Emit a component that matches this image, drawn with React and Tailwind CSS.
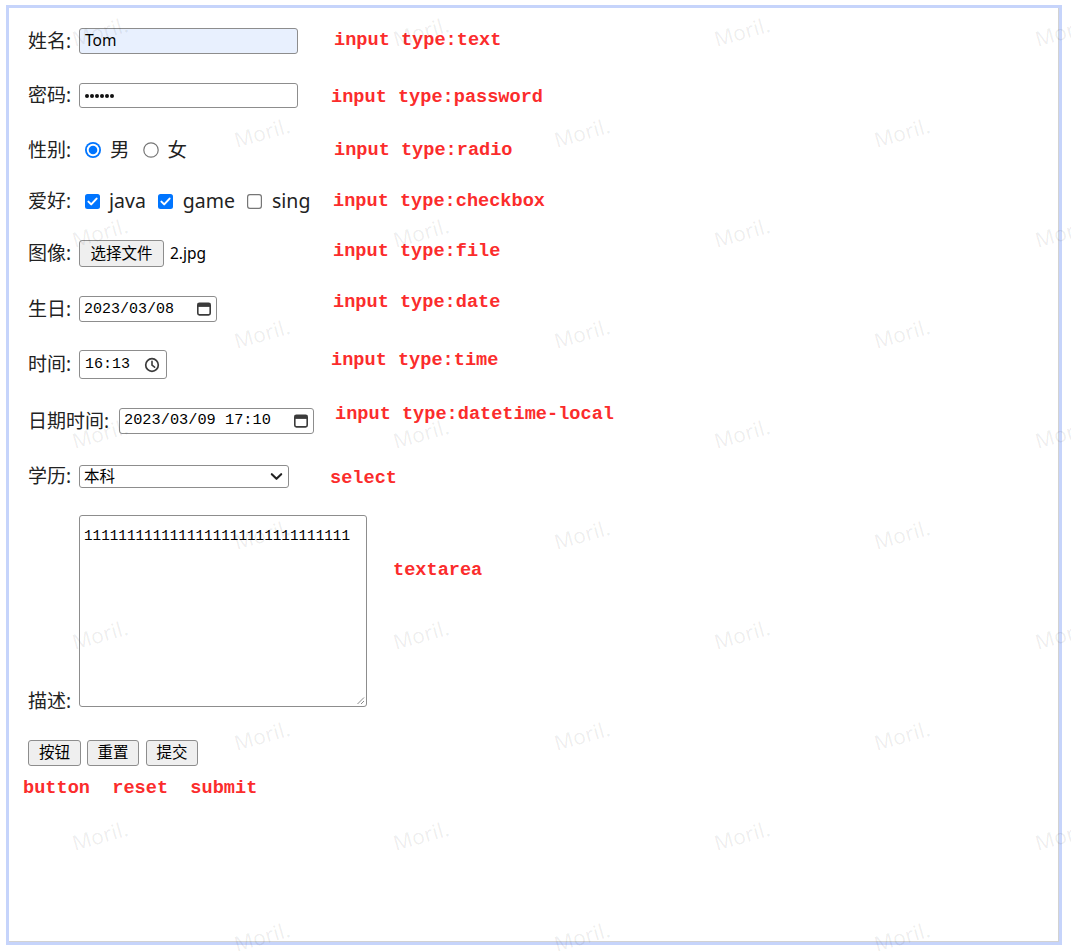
import React from 'react';

const marks = [];
for (let r = 0; r < 10; r++) {
  const xs = r % 2 === 0 ? [100, 421, 742, 1063] : [262, 582, 902];
  xs.forEach((x) => marks.push({ x, y: 32 + r * 100.5 }));
}

const Label = ({ children, w = 'w-[51px]' }) => (
  <span className={`${w} shrink-0 text-[19px] leading-none text-[#222]`}>{children}</span>
);

const Note = ({ children, className = '' }) => (
  <span className={`font-['Liberation_Mono',monospace] font-bold text-[18.6px] leading-none text-[#fb2c2c] whitespace-pre ${className}`}>
    {children}
  </span>
);

const Radio = ({ checked }) =>
  checked ? (
    <svg width="16" height="16" viewBox="0 0 16 16" className="shrink-0">
      <circle cx="8" cy="8" r="8" fill="#0075ff" />
      <circle cx="8" cy="8" r="6.2" fill="#fff" />
      <circle cx="8" cy="8" r="4.3" fill="#0075ff" />
    </svg>
  ) : (
    <svg width="16" height="16" viewBox="0 0 16 16" className="shrink-0">
      <circle cx="8" cy="8" r="7.2" fill="#fff" stroke="#767676" strokeWidth="1.2" />
    </svg>
  );

const Check = ({ checked }) =>
  checked ? (
    <svg width="15" height="15" viewBox="0 0 15 15" className="shrink-0">
      <rect x="0" y="0" width="15" height="15" rx="2.5" fill="#0075ff" />
      <path d="M3.4 7.6 L6.2 10.4 L11.6 4.6" fill="none" stroke="#fff" strokeWidth="2" strokeLinecap="round" strokeLinejoin="round" />
    </svg>
  ) : (
    <svg width="15" height="15" viewBox="0 0 15 15" className="shrink-0">
      <rect x="0.6" y="0.6" width="13.8" height="13.8" rx="2.3" fill="#fff" stroke="#767676" strokeWidth="1.2" />
    </svg>
  );

const Calendar = () => (
  <svg width="16" height="16" viewBox="0 0 16 16" className="shrink-0">
    <rect x="1.8" y="2.3" width="12.4" height="11.6" rx="1.6" fill="none" stroke="#3b3b3b" strokeWidth="1.6" />
    <rect x="1.8" y="2.3" width="12.4" height="3.6" fill="#3b3b3b" />
  </svg>
);

const Clock = () => (
  <svg width="16" height="16" viewBox="0 0 16 16" className="shrink-0">
    <circle cx="8" cy="8" r="6.3" fill="none" stroke="#3b3b3b" strokeWidth="1.7" />
    <path d="M8 4.4 V8.2 L10.6 10.2" fill="none" stroke="#3b3b3b" strokeWidth="1.6" strokeLinecap="round" />
  </svg>
);

const box = 'border border-[#8d8d8d] rounded-[3px] bg-white';
const btn = 'flex items-center justify-center border border-[#8d8d8d] rounded-[3px] bg-[#efefef] text-[15.5px] leading-none text-black';
const word = 'text-[19.5px] leading-none text-[#222]';

export default function App() {
  return (
    <div className="relative w-[1071px] h-[951px] bg-white overflow-hidden pt-[5px] pl-[6px] font-['Noto_Sans','Noto_Sans_CJK_SC',sans-serif]">
      <div className="w-[1056px] h-[940px] border-[3px] border-[#c6d4fb]">
        <div className="h-full border-r border-b border-[#d2d2d2] pl-[19px] pt-[20px]">
          {/* 姓名 */}
          <div className="flex items-center h-[26px]">
            <div className="w-[303px] flex items-center">
              <Label>姓名:</Label>
              <div className="w-[219px] h-[26px] flex items-center pl-[5px] border border-[#8d8d8d] rounded-[3px] bg-[#e8f0fe] text-[15.5px] text-black">Tom</div>
            </div>
            <Note className="ml-[3px]">input type:text</Note>
          </div>

          {/* 密码 */}
          <div className="flex items-center h-[25px] mt-[29px]">
            <div className="w-[303px] flex items-center">
              <Label>密码:</Label>
              <div className={`w-[219px] h-[25px] flex items-center gap-[1px] pl-[5px] ${box}`}>
                {[0, 1, 2, 3, 4, 5].map((d) => (
                  <span key={d} className="w-[4px] h-[4px] rounded-full bg-[#111]" />
                ))}
              </div>
            </div>
            <Note className="mt-[5px]">input type:password</Note>
          </div>

          {/* 性别 */}
          <div className="flex items-center h-[20px] mt-[32px]">
            <div className="w-[303px] flex items-center">
              <Label>性别:</Label>
              <span className="ml-[6px]"><Radio checked /></span>
              <span className={`ml-[9px] ${word}`}>男</span>
              <span className="ml-[13px]"><Radio /></span>
              <span className={`ml-[9px] ${word}`}>女</span>
            </div>
            <Note className="ml-[3px] mt-[2px]">input type:radio</Note>
          </div>

          {/* 爱好 */}
          <div className="flex items-center h-[24px] mt-[29px]">
            <div className="w-[303px] flex items-center">
              <Label>爱好:</Label>
              <span className="ml-[6px]"><Check checked /></span>
              <span className={`ml-[9px] ${word}`}>java</span>
              <span className="ml-[12px]"><Check checked /></span>
              <span className={`ml-[10px] ${word}`}>game</span>
              <span className="ml-[12px]"><Check /></span>
              <span className={`ml-[10px] ${word}`}>sing</span>
            </div>
            <Note className="ml-[2px] mt-[2px]">input type:checkbox</Note>
          </div>

          {/* 图像 */}
          <div className="flex items-center h-[27px] mt-[27px]">
            <div className="w-[303px] flex items-center">
              <Label>图像:</Label>
              <div className={`${btn} w-[85px] h-[27px]`}>选择文件</div>
              <span className="ml-[6px] text-[15.5px] leading-none text-black">2.jpg</span>
            </div>
            <Note className="ml-[2px] mt-[-3px]">input type:file</Note>
          </div>

          {/* 生日 */}
          <div className="flex items-center h-[26px] mt-[29px]">
            <div className="w-[303px] flex items-center">
              <Label>生日:</Label>
              <div className={`w-[138px] h-[26px] flex items-center justify-between pl-[4px] pr-[4px] ${box}`}>
                <span className="font-['Liberation_Mono',monospace] text-[15px] leading-none text-black">2023/03/08</span>
                <Calendar />
              </div>
            </div>
            <Note className="ml-[2px] mt-[-12px]">input type:date</Note>
          </div>

          {/* 时间 */}
          <div className="flex items-center h-[29px] mt-[28px]">
            <div className="w-[303px] flex items-center">
              <Label>时间:</Label>
              <div className={`w-[88px] h-[29px] flex items-center justify-between pl-[5px] pr-[6px] ${box}`}>
                <span className="font-['Liberation_Mono',monospace] text-[15px] leading-none text-black">16:13</span>
                <Clock />
              </div>
            </div>
            <Note className="mt-[-7px]">input type:time</Note>
          </div>

          {/* 日期时间 */}
          <div className="flex items-center h-[26px] mt-[29px]">
            <div className="w-[303px] flex items-center">
              <Label w="w-[91px]">日期时间:</Label>
              <div className={`w-[195px] h-[26px] flex items-center justify-between pl-[4px] pr-[4px] ${box}`}>
                <span className="font-['Liberation_Mono',monospace] text-[15.3px] leading-none text-black whitespace-pre">2023/03/09 17:10</span>
                <Calendar />
              </div>
            </div>
            <Note className="ml-[4px] mt-[-12px]">input type:datetime-local</Note>
          </div>

          {/* 学历 */}
          <div className="flex items-center h-[23px] mt-[31px]">
            <div className="w-[303px] flex items-center">
              <Label>学历:</Label>
              <div className={`w-[210px] h-[23px] flex items-center justify-between pl-[4px] pr-[5px] ${box}`}>
                <span className="text-[15.5px] leading-none text-black">本科</span>
                <svg width="13" height="13" viewBox="0 0 13 13">
                  <path d="M1.8 4.2 L6.5 8.8 L11.2 4.2" fill="none" stroke="#222" strokeWidth="2.1" strokeLinecap="round" strokeLinejoin="round" />
                </svg>
              </div>
            </div>
            <Note className="ml-[-1px] mt-[5px]">select</Note>
          </div>

          {/* 描述 */}
          <div className="flex items-start h-[192px] mt-[27px]">
            <Label w="w-[51px] self-end mb-[-4px]">描述:</Label>
            <div className={`relative w-[288px] h-[192px] pl-[4px] pt-[6px] ${box}`}>
              <span className="font-['Liberation_Mono',monospace] text-[14.3px] leading-none text-black">1111111111111111111111111111111</span>
              <svg width="10" height="10" viewBox="0 0 10 10" className="absolute right-[1px] bottom-[1px]">
                <path d="M9 2.5 L2.5 9 M9 6 L6 9" stroke="#8a8a8a" strokeWidth="1" />
              </svg>
            </div>
            <Note className="ml-[26px] mt-[47px]">textarea</Note>
          </div>

          {/* 按钮 */}
          <div className="flex items-center h-[26px] mt-[33px]">
            <div className={`${btn} w-[53px] h-[26px]`}>按钮</div>
            <div className={`${btn} w-[52px] h-[26px] ml-[6px]`}>重置</div>
            <div className={`${btn} w-[52px] h-[26px] ml-[7px]`}>提交</div>
          </div>

          <div className="flex items-center h-[18px] mt-[14px]">
            <Note className="ml-[-5px]">button  reset  submit</Note>
          </div>
        </div>
      </div>

      {/* watermark */}
      <div className="absolute inset-0 pointer-events-none">
        {marks.map((m, i) => (
          <span
            key={i}
            className="absolute -translate-x-1/2 -translate-y-1/2 -rotate-[16deg] text-[21px] leading-none text-black/[0.07] whitespace-nowrap"
            style={{ left: m.x, top: m.y }}
          >
            Moril.
          </span>
        ))}
      </div>
    </div>
  );
}
